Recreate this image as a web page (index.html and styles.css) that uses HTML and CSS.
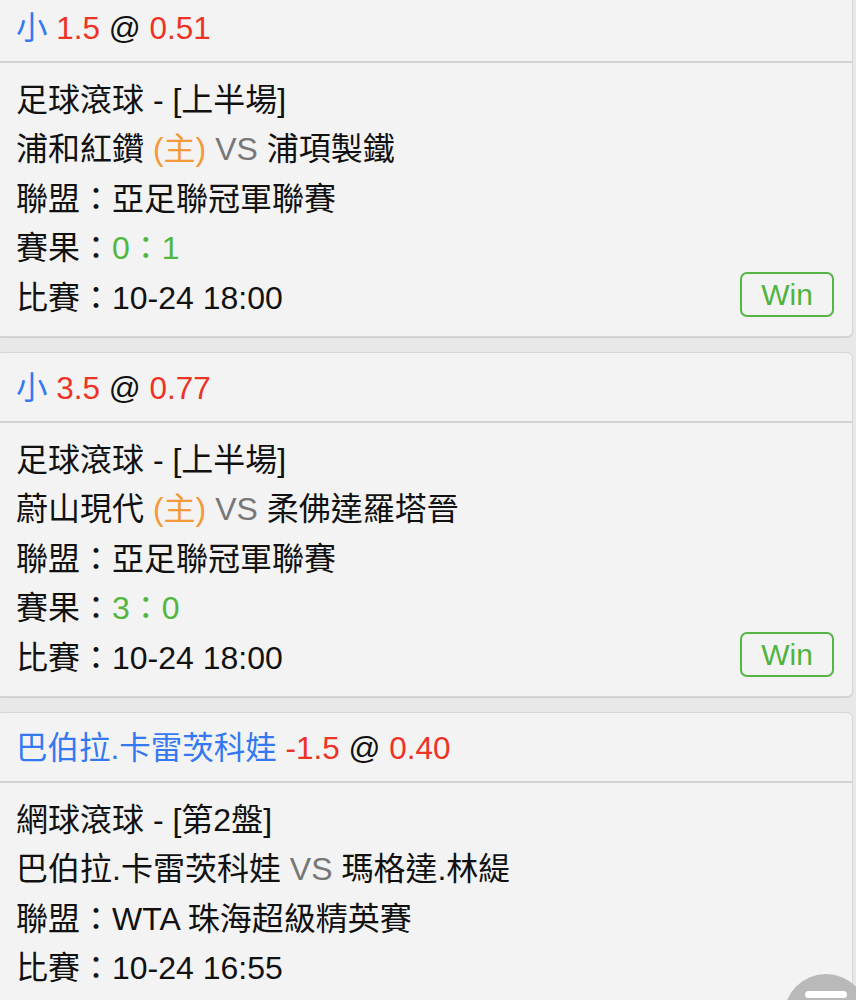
FILE: index.html
```html
<!DOCTYPE html>
<html>

<head>
    <meta charset="UTF-8">
    <title>注單記錄</title>
    <link rel="stylesheet" href="styles.css">
</head>

<body>

    <main class="list">

        <div class="card">
            <div class="card-head">
                <span class="blue">小</span> <span class="red">1.5</span> @ <span class="red">0.51</span>
            </div>
            <div class="card-body">
                <p>足球滾球 - [上半場]</p>
                <p>浦和紅鑽 <span class="home">(主)</span> <span class="vs">VS</span> 浦項製鐵</p>
                <p>聯盟：亞足聯冠軍聯賽</p>
                <p>賽果：<span class="green">0：1</span></p>
                <div class="row-last">
                    <p>比賽：10-24 18:00</p>
                    <span class="win">Win</span>
                </div>
            </div>
        </div>

        <div class="card">
            <div class="card-head">
                <span class="blue">小</span> <span class="red">3.5</span> @ <span class="red">0.77</span>
            </div>
            <div class="card-body">
                <p>足球滾球 - [上半場]</p>
                <p>蔚山現代 <span class="home">(主)</span> <span class="vs">VS</span> 柔佛達羅塔晉</p>
                <p>聯盟：亞足聯冠軍聯賽</p>
                <p>賽果：<span class="green">3：0</span></p>
                <div class="row-last">
                    <p>比賽：10-24 18:00</p>
                    <span class="win">Win</span>
                </div>
            </div>
        </div>

        <div class="card">
            <div class="card-head">
                <span class="blue">巴伯拉.卡雷茨科娃</span> <span class="red">-1.5</span> @ <span class="red">0.40</span>
            </div>
            <div class="card-body">
                <p>網球滾球 - [第2盤]</p>
                <p>巴伯拉.卡雷茨科娃 <span class="vs">VS</span> 瑪格達.林緹</p>
                <p>聯盟：WTA 珠海超級精英賽</p>
                <p>比賽：10-24 16:55</p>
            </div>
        </div>

    </main>

    <!-- floating menu button -->
    <div class="fab"><span></span></div>

</body>

</html>
```

FILE: styles.css
```css
body {
    font-family: "Liberation Sans", "Noto Sans CJK TC", sans-serif;
    font-size: 32px;
    line-height: 49.4px;
    background-color: #e8e8e8;
    color: #111;
    margin: 0;
    overflow: hidden;
}

.list {
    margin: -8px 3px 0 -4px;
}

.card {
    background-color: #f3f3f3;
    border: 1px solid #d6d6d6;
    border-radius: 6px;
    box-shadow: 0 1px 0 #d0d0d0;
    margin-bottom: 15px;
}

.card-head {
    padding: 11px 17px 8px 19px;
    border-bottom: 2px solid #d2d2d2;
    font-size: 31.5px;
    line-height: 49px;
    white-space: nowrap;
}

.card-body {
    padding: 13px 18px 13px 19px;
}

.card-body p {
    margin: 0;
    white-space: nowrap;
}

.row-last {
    display: flex;
    justify-content: space-between;
    align-items: flex-start;
}

.win {
    box-sizing: border-box;
    width: 94px;
    height: 45px;
    margin-top: -2px;
    border: 2px solid #55b646;
    border-radius: 7px;
    color: #4fb33f;
    font-size: 30px;
    line-height: 41px;
    text-align: center;
}

.blue {
    color: #3479f2;
}

.red {
    color: #ec3326;
}

.green {
    color: #52b63f;
}

.home {
    color: #f39a3a;
}

.vs {
    color: #777;
}

.fab {
    position: fixed;
    left: 784px;
    top: 974px;
    width: 84px;
    height: 84px;
    border-radius: 50%;
    background-color: #b9b9b9;
}

.fab span {
    display: block;
    width: 42px;
    height: 7px;
    margin: 17px auto 0;
    border-radius: 4px;
    background-color: #fff;
}
```
